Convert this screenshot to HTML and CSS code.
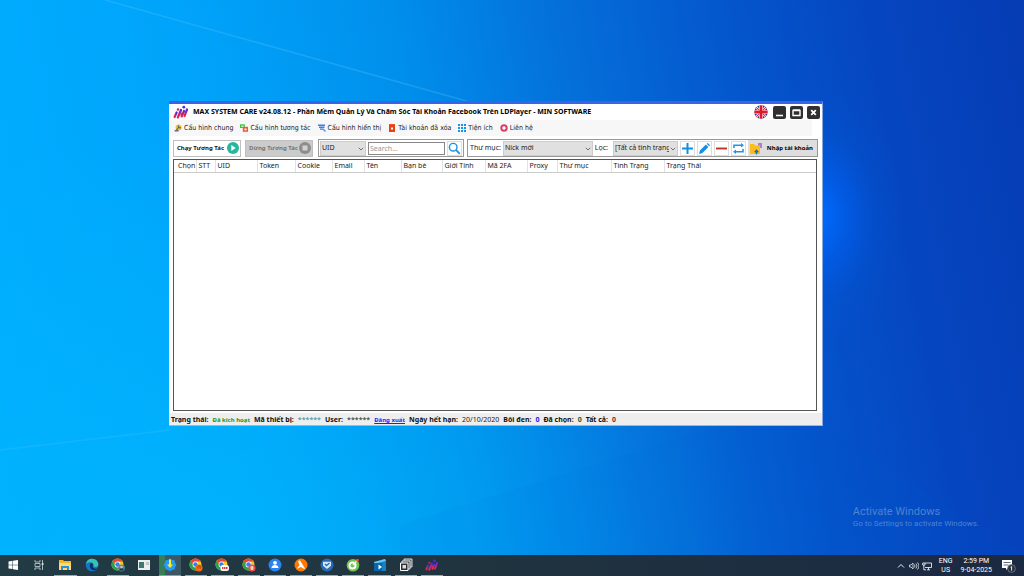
FILE: index.html
```html
<!DOCTYPE html>
<html lang="vi">
<head>
<meta charset="utf-8">
<meta name="viewport" content="width=device-width, initial-scale=1">
<title>MAX SYSTEM CARE</title>
<link rel="stylesheet" href="styles.css">
</head>
<body>
<svg class="defs" width="0" height="0" aria-hidden="true">
  <linearGradient id="brand" x1="0" y1="1" x2="1" y2="0"><stop offset="0" stop-color="#f0283c"/><stop offset=".5" stop-color="#b02a86"/><stop offset="1" stop-color="#4a2be0"/></linearGradient>
  <symbol id="min" viewBox="0 0 16 14"><g fill="none" stroke="url(#brand)" stroke-width="2.200" stroke-linecap="round" stroke-linejoin="round"><path d="M1.600 12 3.600 7.500"/><path d="M4.800 12.500 8 5"/><path d="M8.500 8.500 8.700 11.500 11 6"/><path d="M11.500 11 14 4.500"/></g><circle cx="5" cy="4.500" r="1.200" fill="#c82b60"/><circle cx="10.800" cy="2.200" r="1.400" fill="#5b2bd8"/></symbol>
  <symbol id="chrome" viewBox="0 0 14 14"><circle cx="6.500" cy="6.500" r="6" fill="#fbc91d"/><path d="M1.300 3.500a6 6 0 0 0 5 9l2.700-4.600-2.500-1.400z" fill="#2fa04f"/><path d="M1.300 3.500a6 6 0 0 1 10.400 0H6.500v3z" fill="#e8453c"/><circle cx="6.500" cy="6.500" r="2.900" fill="#fff"/><circle cx="6.500" cy="6.500" r="2.200" fill="#3d7fe8"/></symbol>
  <symbol id="chev" viewBox="0 0 6 4"><path d="M.8.8 3 3 5.200.8" fill="none" stroke="#555" stroke-width=".8"/></symbol>
</svg>

<div class="screen">
<main class="desktop">
  <svg class="beams" viewBox="0 0 1024 555" preserveAspectRatio="none" aria-hidden="true">
    <path d="M105 0 470 102" stroke="#5cc4ff" stroke-opacity=".28" stroke-width="1.500"/>
    <path d="M0 450 170 430" stroke="#5ac8ff" stroke-opacity=".2" stroke-width="1.500"/>
    <path d="M400 525 720 426H823L1024 555H400z" fill="#0060d8" fill-opacity=".05"/>
  </svg>

  <section class="window" aria-label="MAX SYSTEM CARE">
    <header class="titlebar">
      <svg class="logo"><use href="#min"/></svg>
      <h1>MAX SYSTEM CARE v24.08.12 - Phần Mềm Quản Lý Và Chăm Sóc Tài Khoản Facebook Trên LDPlayer - MIN SOFTWARE</h1>
      <button class="plain flag" aria-label="English"><svg viewBox="0 0 14 14"><clipPath id="round"><circle cx="7" cy="7" r="6.700"/></clipPath><g clip-path="url(#round)"><path fill="#223a8c" d="M0 0h14v14H0z"/><path d="m0 0 14 14M14 0 0 14" stroke="#fff" stroke-width="2.600"/><path d="m0 0 14 14M14 0 0 14" stroke="#e0253c" stroke-width="1.100"/><path d="M7 0v14M0 7h14" stroke="#fff" stroke-width="4"/><path d="M7 0v14M0 7h14" stroke="#e0182f" stroke-width="2.800"/></g></svg></button>
      <div class="controls">
        <button aria-label="Minimize"><svg viewBox="0 0 13 13"><path d="M3 9.500h7" stroke="#fff" stroke-width="1.600"/></svg></button>
        <button aria-label="Maximize"><svg viewBox="0 0 13 13"><path d="M3 4.500h7v5H3zM3 4h7" fill="none" stroke="#fff" stroke-width="1.400"/></svg></button>
        <button aria-label="Close"><svg viewBox="0 0 13 13"><path d="m4.200 4.200 4.600 4.600m0-4.600L4.200 8.800" stroke="#fff" stroke-width="1.800"/></svg></button>
      </div>
    </header>

    <nav class="menubar">
      <button><svg viewBox="0 0 8 8"><circle cx="4.600" cy="3.500" r="3" fill="#efc42e"/><path d="M1.500 7 4.500 3.500M4 1.500l1 2 2 .4" stroke="#4a6491" stroke-width="1.100" fill="none"/><path d="M.6 6h4v1.500h-4z" fill="#56708e"/></svg>Cấu hình chung</button>
      <button><svg viewBox="0 0 8 8"><path d="M0 .3h4.800V4H0z" fill="#3fbf3c"/><path d="M2.800 2.800H8v5H2.800z" fill="#ed5a3a"/><path d="M4.500 4.500h2v1.800h-2z" fill="#fff"/><path d="M1.200 1.500H3.500V3H1.200z" fill="#c9f3bd"/></svg>Cấu hình tương tác</button>
      <button><svg viewBox="0 0 8 8"><path d="M0 .5h7v1.500H0zM1 2.600h5.500v1.300H1zM2 4.600h3.500v1.200H2z" fill="#3c7fe0"/><path d="m5 5 2.500 2.500" stroke="#3aa8dd" stroke-width="1.500"/></svg>Cấu hình hiển thị</button>
      <button><svg viewBox="0 0 8 8"><path d="M1 1h6v7H1z" fill="#ee3f12"/><path d="M1 .6h6" stroke="#ee3f12"/><path d="M3 3.500h2v2H3z" fill="#fff"/></svg>Tài khoản đã xóa</button>
      <button><svg viewBox="0 0 8 8"><path d="M0 0h2v2H0zm3 0h2v2H3zm3 0h2v2H6zM0 3h2v2H0zm3 0h2v2H3zm3 0h2v2H6zM0 6h2v2H0zm3 0h2v2H3zm3 0h2v2H6z" fill="#1193ee"/></svg>Tiện ích</button>
      <button><svg viewBox="0 0 8 8"><circle cx="4" cy="4" r="2.700" fill="#fff" stroke="#d4426a" stroke-width="2"/></svg>Liên hệ</button>
    </nav>

    <div class="toolbar">
      <button class="run">Chạy Tương Tác<svg viewBox="0 0 12 12"><circle cx="6" cy="6" r="6" fill="#29b69f"/><path d="M4.300 3v6l4.400-3z" fill="#fff"/></svg></button>
      <button class="run stop" disabled>Dừng Tương Tác<svg viewBox="0 0 12 12"><circle cx="6" cy="6" r="6" fill="#8d8d8d"/><path d="M3.500 3.500h5v5h-5z" fill="#d2d2d2"/></svg></button>
      <div class="group find">
        <span class="pick pick-uid"><select aria-label="Search field"><option>UID</option></select><svg><use href="#chev"/></svg></span>
        <input type="text" placeholder="Search..." aria-label="Search">
        <button class="tool" aria-label="Search"><svg viewBox="0 0 13 13"><circle cx="5.200" cy="5.200" r="3.800" fill="none" stroke="#1593e8" stroke-width="1.400"/><path d="m8.200 8.200 3.600 3.600" stroke="#1593e8" stroke-width="1.800"/></svg></button>
      </div>
      <div class="group filters">
        <label for="folder">Thư mục:</label>
        <span class="pick pick-folder"><select id="folder"><option>Nick mới</option></select><svg><use href="#chev"/></svg></span>
        <label class="state-label" for="state">Lọc:</label>
        <span class="pick pick-state"><select id="state"><option>[Tất cả tình trạng]</option></select><svg><use href="#chev"/></svg></span>
        <button class="tool" aria-label="Add"><svg viewBox="0 0 13 13"><path d="M6.500 1v11M1 6.500h11" stroke="#118fe4" stroke-width="2"/></svg></button>
        <button class="tool" aria-label="Edit"><svg viewBox="0 0 13 13"><path d="m1 12 .9-3.400 6-6 2.500 2.500-6 6zM8.700 1.800l1-.9 2.400 2.400-.9 1z" fill="#158fe2"/></svg></button>
        <button class="tool" aria-label="Remove"><svg viewBox="0 0 13 13"><path d="M1 6.500h11" stroke="#bd3527" stroke-width="1.900"/></svg></button>
        <button class="tool" aria-label="Refresh"><svg viewBox="0 0 13 13"><path d="M2 6V3.300h8M11 7v2.800H3" fill="none" stroke="#2095ee" stroke-width="1.600"/><path d="m9 1 3 2.300-3 2.300zM4 7.500 1 9.800l3 2.300z" fill="#2095ee"/></svg></button>
        <button class="import"><svg viewBox="0 0 14 13"><path d="M9 1h4v5H9z" fill="#a982cf"/><path d="M1 2h4l1.300 1.500H11V12H1z" fill="#fbbd1e"/><path d="M7.500 12.500V8.500m-1.800 1.800 1.800-2 1.800 2" fill="none" stroke="#1c6dad" stroke-width="1.300"/></svg>Nhập tài khoản</button>
      </div>
    </div>

    <div class="grid">
      <table>
        <colgroup><col class="c22"><col class="c19"><col class="c42"><col class="c38"><col class="c37"><col class="c32"><col class="c37"><col class="c41"><col class="c43"><col class="c42"><col class="c30"><col class="c54"><col class="c53"><col></colgroup>
        <thead><tr><th>Chọn</th><th>STT</th><th>UID</th><th>Token</th><th>Cookie</th><th>Email</th><th>Tên</th><th>Bạn bè</th><th>Giới Tính</th><th>Mã 2FA</th><th>Proxy</th><th>Thư mục</th><th>Tình Trạng</th><th>Trạng Thái</th></tr></thead>
      </table>
    </div>

    <footer class="status">
      <b>Trạng thái:</b><b class="small green">Đã kích hoạt</b>
      <b>Mã thiết bị:</b><span class="teal stars">******</span>
      <b>User:</b><span class="stars">******</span>
      <a class="small" href="#">Đăng xuất</a>
      <b>Ngày hết hạn:</b><span>20/10/2020</span>
      <b>Bôi đen:</b><b class="blue">0</b>
      <b>Đã chọn:</b><b class="dark-green">0</b>
      <b>Tất cả:</b><b class="red">0</b>
    </footer>
  </section>

  <aside class="activate"><p class="head">Activate Windows</p><p>Go to Settings to activate Windows.</p></aside>
</main>

<footer class="taskbar">
  <nav class="apps">
    <button aria-label="Start"><svg viewBox="0 0 14 14"><path d="m2.500 3.400 4-.6v3.900h-4zm4.500-.7 5-.7v4.700H7zM2.500 7.200h4v3.900l-4-.6zm4.500 0h5V12l-5-.8z" fill="#fff"/></svg></button>
    <button aria-label="Task View"><svg viewBox="0 0 14 14"><path d="M3 2v2h5V2M3 12v-2h5v2M3 5.500h5v3H3zM10.500 2v10" fill="none" stroke="#b8c4c8" stroke-width=".9"/><path d="M9.700 5h1.800v2H9.700z" fill="#d8e0e2"/></svg></button>
    <button class="open" aria-label="File Explorer"><svg viewBox="0 0 14 14"><path d="M1 2h4l1 1h7v9H1z" fill="#f3b62a"/><path d="M1 5h12v7H1z" fill="#fcda70"/><path d="M3 8h8v4H9V10H5v2H3z" fill="#2c8fdb"/></svg></button>
    <button aria-label="Edge"><svg viewBox="0 0 14 14"><circle cx="7" cy="7" r="6.300" fill="#1376cc"/><path d="M1 6C1.500 2.500 4 .7 7 .7c4 0 6.300 2.800 6.300 5.500 0 2.300-2 3-3.600 2.600C8 8.500 9.500 7 8 5.500 6 3.500 3 4 1 6z" fill="#36c3b4"/><path d="M7 4.800C4.500 5.500 4 9.500 6.500 11.500c2 1.200 4.500.7 5.800-1C9 11.300 6.800 9 8 7.500z" fill="#102f59"/></svg></button>
    <button class="open" aria-label="Chrome"><svg viewBox="0 0 14 14"><use href="#chrome"/><circle cx="10.500" cy="10" r="3.400" fill="#55889c"/><path d="M8.500 10.500h4v2h-4z" fill="#173441"/><circle cx="10.500" cy="9" r="1.300" fill="#e1bd9a"/></svg></button>
    <button aria-label="Program"><svg viewBox="0 0 14 14"><path d="M1 2h12v10H1z" fill="#eceeed"/><path d="M2 4h5v6H2z" fill="#3e7874"/><path d="M9 4h3v3H9z" fill="#c0c6c8"/></svg></button>
    <button class="open active" aria-label="Downloader"><svg viewBox="0 0 14 14"><path d="m7 .5 2 1.300 2.500.5.500 2.500L13.500 7 12 9.200l-.5 2.300-2.500.5-2 1.500-2-1.500-2.500-.5L2 9.200.5 7 2 4.800l.5-2.500L5 1.800z" fill="#249af3"/><path d="M6 1.500h2v5h2L7 10 4 6.500h2z" fill="#fcee23"/></svg></button>
    <button class="open" aria-label="Chrome profile 2"><svg viewBox="0 0 14 14"><use href="#chrome"/><circle cx="10" cy="10" r="3.600" fill="#ef6c10"/><path d="M8.800 10.500V9a1.200 1.200 0 0 1 2.400 0v1.500" fill="none" stroke="#9f3a04" stroke-width=".8"/></svg></button>
    <button class="open" aria-label="Chrome profile 3"><svg viewBox="0 0 14 14"><use href="#chrome"/><rect x="5.500" y="7" width="8.500" height="6" rx="2.500" fill="#fff"/><path d="M7 10h6" stroke="#e33643" stroke-width="2" stroke-dasharray="1.400 .5"/></svg></button>
    <button class="open" aria-label="Chrome profile 4"><svg viewBox="0 0 14 14"><use href="#chrome"/><circle cx="10" cy="10" r="3.600" fill="#e94c4c"/><circle cx="10" cy="10" r="1.900" fill="#f3a58c"/><path d="M10 8v4" stroke="#fff"/></svg></button>
    <button class="open" aria-label="Account"><svg viewBox="0 0 14 14"><circle cx="7" cy="7" r="6.500" fill="#2c83f0"/><circle cx="7" cy="4.800" r="1.900" fill="#fff"/><path d="M3.500 10c0-4 7-4 7 0z" fill="#fff"/></svg></button>
    <button class="open" aria-label="Avast"><svg viewBox="0 0 14 14"><circle cx="7" cy="7" r="6.500" fill="#ff7800"/><path d="m4 3 2-.5 5 8-1 .5-3-2-3.500 1.500L3 10l2.500-2.500z" fill="#fff"/></svg></button>
    <button class="open" aria-label="Security"><svg viewBox="0 0 14 14"><circle cx="7" cy="7" r="6.500" fill="#2769ba"/><path d="M3 3.800h8v4L7 11 3 7.800z" fill="#d7e8f4"/><path d="m5 6 1.500 1.500L9.500 5" fill="none" stroke="#2769ba" stroke-width="1.300"/></svg></button>
    <button class="open" aria-label="Coc Coc"><svg viewBox="0 0 14 14"><circle cx="7" cy="7.300" r="6.300" fill="#70c44b"/><circle cx="6.500" cy="7.500" r="4" fill="#fff"/><circle cx="6.500" cy="7.500" r="2" fill="#78bd5b"/><path d="M7 7 12 1.500" stroke="#e9f5df" stroke-width="1.400"/><circle cx="11.500" cy="2.500" r="1.300" fill="#dc5441"/></svg></button>
    <button class="open" aria-label="Video Editor"><svg viewBox="0 0 14 14"><path d="m1 4 11-3 1 2.500H13V13H1z" fill="#1481c4"/><path d="m1 4 11-3 1 2-12 3z" fill="#66c6ee"/><path d="M1 5h8v8H1z" fill="#0766ab"/><path d="M5.500 6.500v5L9 9z" fill="#fff"/></svg></button>
    <button class="open" aria-label="Virtual machines"><svg viewBox="0 0 14 14"><path d="M5 1h8v8H5z" fill="#5a6568" stroke="#d8d8d8"/><path d="M3 3h8v8H3z" fill="#41494c" stroke="#e4e4e4"/><path d="M1.500 5h7.500v7.500H1.500z" fill="#293034" stroke="#fff"/><path d="M3.500 7h3.500v3.500H3.500z" fill="#ddd"/></svg></button>
    <button class="open" aria-label="MIN Software"><svg><use href="#min"/></svg></button>
  </nav>
  <div class="tray">
    <svg class="tray-icon" viewBox="0 0 10 10"><path d="m2 6.500 3-3 3 3" fill="none" stroke="#fff" stroke-width=".9"/></svg>
    <svg class="tray-icon" viewBox="0 0 10 10"><path d="M.5 4H2l2-2v6L2 6H.5zM5.500 3.500a3 3 0 0 1 0 3M7 2.500a4 4 0 0 1 0 5M8.500 1.500a5 5 0 0 1 0 7" fill="none" stroke="#dce4ea" stroke-width=".8"/></svg>
    <svg class="tray-icon" viewBox="0 0 10 10"><path d="M3 2h6.500v4.500H3M5 8.800h3M6.500 6.500v2.300M.7 2v2h2.300V2zM1.800 4v4.800H4" fill="none" stroke="#fff" stroke-width=".8"/></svg>
    <div class="lang">ENG<br>US</div>
    <time datetime="2025-04-09T14:59">2:59 PM<br>9-04-2025</time>
    <button class="plain notice" aria-label="Notifications"><svg viewBox="0 0 16 14"><path d="M1 1h10v8H7l-2 2V9H1z" fill="#fff"/><path d="M2.500 3.500h7M2.500 6h5" stroke="#33465f" stroke-width=".8"/><circle cx="10.500" cy="9.500" r="3.900" fill="#29303a" stroke="#858b91" stroke-width=".7"/><path d="m9.600 8.200 1-.7v4" fill="none" stroke="#fff" stroke-width=".9"/></svg></button>
  </div>
</footer>
</div>
</body>
</html>
```
FILE: styles.css
```css
* { box-sizing: border-box; }
body { margin: 0; font-family: "Noto Sans", sans-serif; font-size: 7px; line-height: 10px; color: #222; }
button, input, select { font: inherit; color: inherit; margin: 0; padding: 0; border: 0; border-radius: 0; }
button { display: flex; align-items: center; background: none; }
svg { display: block; flex: none; }
p, h1 { margin: 0; }
.defs { position: absolute; }

.screen { min-height: 100vh; display: flex; flex-direction: column; }
.desktop {
  flex: 1; position: relative; overflow: hidden;
  background:
    radial-gradient(ellipse 85px 130px at 80% 39%, rgba(0, 108, 255, .95), rgba(0, 98, 245, .55) 35%, rgba(0, 90, 225, .2) 65%, transparent),
    radial-gradient(ellipse 560px 420px at 20% 100%, rgba(0, 190, 255, .5), transparent),
    linear-gradient(80deg, #00aeff 0%, #00a4fa 25%, #0090ec 43%, #0470da 58%, #0455cc 74%, #0546c0 86%, #053cb4 100%);
}
.beams { position: absolute; inset: 0; width: 100%; height: 100%; }

.window {
  position: absolute; left: 169px; right: 201px; top: 101px; bottom: 129px;
  display: flex; flex-direction: column;
  background: #fff; border-top: 3px solid #3c62e6; border-right: 1px solid #8aa8dc; border-bottom: 1px solid #aab6c2;
}
.titlebar { display: flex; align-items: center; height: 16px; padding: 0 2px 0 4px; }
.logo { width: 16px; height: 14px; margin-right: 4px; }
.titlebar h1 { flex: 1; font-size: 7px; font-weight: 700; color: #000; white-space: nowrap; }
.flag svg { width: 14px; height: 14px; }
.controls { display: flex; gap: 4px; margin-left: 5px; }
.controls button { width: 13px; height: 13px; border-radius: 2px; background: #303030; }
.controls svg { width: 13px; height: 13px; }

.menubar { display: flex; gap: 7px; height: 16px; padding-left: 5px; margin-right: 10px; background: #f7f7f7; font-family: "DejaVu Sans Condensed", "Noto Sans", sans-serif; }
.menubar button { gap: 2px; color: #222; white-space: nowrap; }
.menubar svg { width: 8px; height: 8px; }

.toolbar { display: flex; gap: 4px; padding: 3px 4px 2px; align-items: center; }
.run { width: 68px; height: 17px; justify-content: space-between; padding: 0 1px 0 3px; border: 1px solid #bfbfbf; font-weight: 700; font-size: 6px; color: #111; white-space: nowrap; background: #fff; }
.run svg { width: 12px; height: 12px; }
.stop { background: #cbcbcb; color: #757575; }
.group { display: flex; align-items: center; height: 18px; border: 1px solid #999; gap: 2px; padding: 0 1px; }
.find { width: 146px; margin-left: 1px; }
.find input { flex: 1; min-width: 0; height: 13px; border: 1px solid #888; padding: 0 1px; background: #fff; }
.find input::placeholder { color: #999; opacity: 1; }
.filters { flex: 1; min-width: 0; margin-left: -1px; padding: 0 0 0 2px; white-space: nowrap; }
.state-label { margin-right: 3px; }
.pick { position: relative; }
.pick select { width: 100%; height: 15px; display: block; appearance: none; background: #e0e0e0; border: 1px solid #ccc; padding: 0 8px 0 1px; }
.pick svg { position: absolute; right: 2px; top: 6px; width: 6px; height: 4px; pointer-events: none; }
.pick-uid { width: 46px; }
.pick-folder { flex: 1; }
.pick-state { width: 65px; }
.tool { width: 15px; height: 15px; border: 1px solid #ddd; justify-content: center; background: #fff; }
.tool svg { width: 13px; height: 13px; }
.import { width: 69px; height: 16px; justify-content: space-between; padding: 0 4px 0 1px; background: #dedede; font-weight: 700; font-size: 6px; color: #000; white-space: nowrap; }
.import svg { width: 14px; height: 13px; }

.grid { flex: 1; margin: 0 5px 0 4px; border: 1px solid #555; background: #fff; }
table { width: 100%; table-layout: fixed; border-collapse: collapse; }
th { height: 12px; padding: 0 0 0 2px; text-align: left; font-weight: 400; white-space: nowrap; border-right: 1px solid #e2e2e2; border-bottom: 1px solid #ccc; }
th:first-child { padding-left: 4px; }
th:last-child { border-right: 0; }
.c19 { width: 19px; } .c22 { width: 22px; } .c30 { width: 30px; } .c32 { width: 32px; }
.c37 { width: 37px; } .c38 { width: 38px; } .c41 { width: 41px; } .c42 { width: 42px; }
.c43 { width: 43px; } .c53 { width: 53px; } .c54 { width: 54px; }

.status { display: flex; align-items: center; gap: 4px; height: 12px; margin-top: 2px; padding: 2px 0 0 2px; background: #eee; white-space: nowrap; }
.status b { color: #111; }
.status .small { font-size: 6px; font-weight: 700; }
.status .green { color: #149522; }
.status .teal { color: #268c99; }
.status .blue { color: #2020ff; }
.status .dark-green { color: #14601c; }
.status .red { color: #951b25; }
.status a { color: #1e1eff; }

.activate { position: absolute; right: 45px; bottom: 25px; font-family: Roboto, sans-serif; font-size: 8px; line-height: 12px; color: #4f82cf; white-space: nowrap; }
.activate .head { font-size: 11px; }

.taskbar { display: flex; justify-content: space-between; height: 21px; background: linear-gradient(90deg, #223b44, #20343f 45%, #1b2942); color: #fff; }
.apps { display: grid; grid-template-columns: repeat(17, 1fr); width: 445px; }
.apps button { justify-content: center; border-bottom: 1px solid transparent; }
.apps svg { width: 14px; height: 14px; }
.apps .open { border-bottom-color: #74b4e5; margin: 0 2px; }
.apps .active { background: linear-gradient(90deg, #397c58 25%, #3d5862 25%); border-bottom-color: #4ed43f; margin: 0 2px; }
.tray { display: flex; align-items: center; gap: 3px; padding-right: 9px; font-family: Roboto, sans-serif; font-size: 7px; line-height: 9px; text-align: center; white-space: nowrap; }
.tray-icon { width: 10px; height: 10px; }
.lang { margin-left: 4px; }
.tray time { margin: 0 6px 0 5px; }
.notice svg { width: 16px; height: 14px; }
.tray { padding-right: 7px; }
```
